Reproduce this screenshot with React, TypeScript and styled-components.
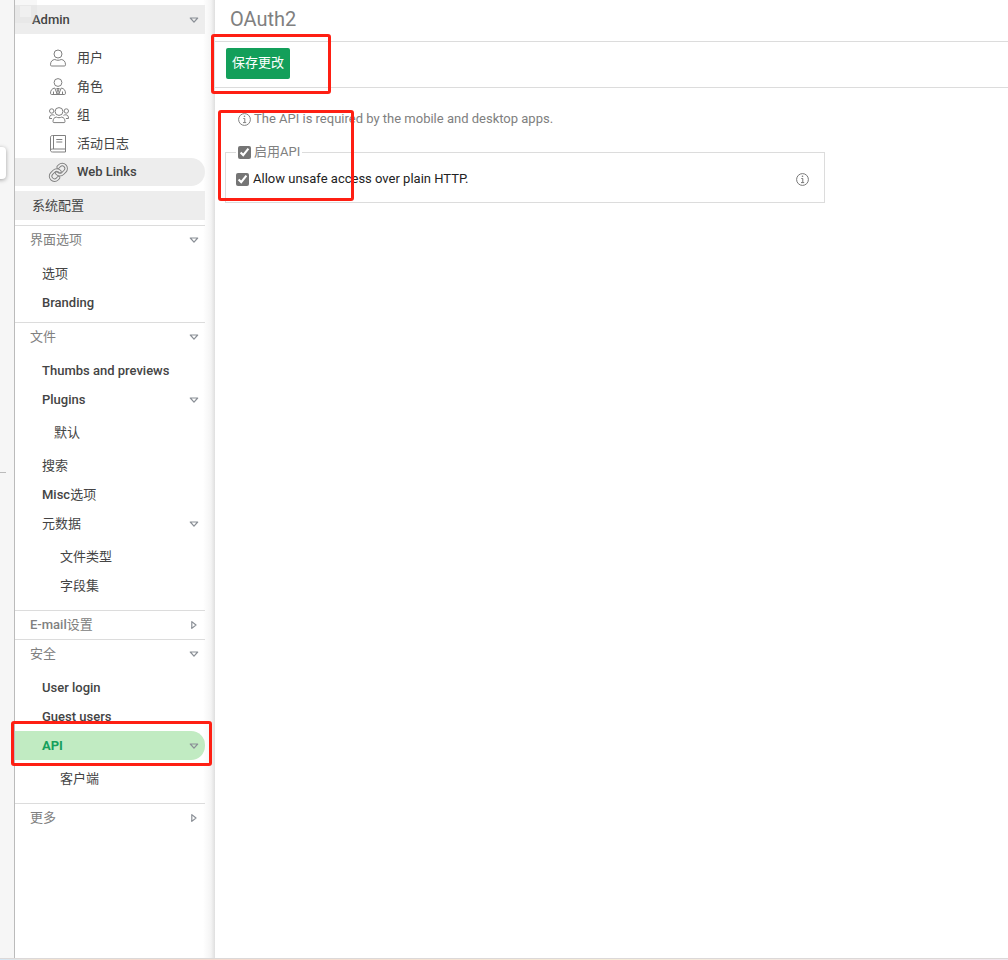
import React from 'react';
import styled, { createGlobalStyle, css } from 'styled-components';

const GlobalStyle = createGlobalStyle`
  * { box-sizing: border-box; }
  body {
    margin: 0;
    background: #fff;
    color: #444;
    font-family: Roboto, 'Noto Sans CJK SC', sans-serif;
    font-size: 13px;
    line-height: 20px;
  }
  ul { list-style: none; margin: 0; padding: 0; }
  a { color: inherit; text-decoration: none; }
`;

const Page = styled.div`
  position: relative;
  display: flex;
  flex-direction: column;
  min-height: 100vh;
`;

const Columns = styled.div`
  display: flex;
  flex: 1;
`;

const Rail = styled.div`
  position: relative;
  flex: none;
  width: 15px;
  background: #f6f6f6;
  border-right: 1px solid #bbb;
`;

const RailTab = styled.div`
  position: absolute;
  left: -6px;
  top: 147px;
  width: 12px;
  height: 32px;
  border-radius: 4px;
  background: #fff;
  box-shadow: 0 1px 4px rgba(0, 0, 0, 0.35);
`;

const RailLine = styled.div`
  position: absolute;
  left: 0;
  top: 472px;
  width: 6px;
  height: 1px;
  background: #bbb;
`;

const Sidebar = styled.nav`
  flex: none;
  width: 200px;
  padding: 5px 10px 0 0;
  background: linear-gradient(to left, #dfdfdf 0, #f4f4f4 4px, #fff 12px);
`;

const Ghost = styled.div`
  position: absolute;
  left: 15px;
  top: 0;
  width: 22px;
  height: 23px;
  border: solid rgba(0, 0, 0, 0.03);
  border-width: 6px 6px 6px 5px;
  background: rgba(255, 255, 255, 0.2);
`;

const Banner = styled.a`
  display: flex;
  align-items: center;
  justify-content: space-between;
  height: 29px;
  padding: 0 6px 0 17px;
  background: #ededed;
  font-weight: 500;
`;

const rowColors = {
  plain: css``,
  grey: css`background: #ededed;`,
  green: css`
    background: #c1ebc2;
    color: #16a05c;
    font-weight: 700;
  `,
};

const Row = styled.a<{ $indent: number; $tone?: keyof typeof rowColors }>`
  display: flex;
  align-items: center;
  justify-content: space-between;
  height: 28px;
  padding: 0 6px 0 ${(p) => p.$indent}px;
  border-radius: 0 14px 14px 0;
  font-weight: 500;
  ${(p) => rowColors[p.$tone ?? 'plain']}
`;

const Item = styled.li`
  &:nth-child(even) > a { height: 29px; }
`;

const IconList = styled.ul`
  padding: 10px 0 5px;
`;

const IconRow = styled(Row)`
  justify-content: flex-start;
  gap: 8px;
`;

const Group = styled.section`
  border-top: 1px solid #dcdcdc;
`;

const SystemBlock = styled.div`
  padding-bottom: 5px;
`;

const GroupHeader = styled.button<{ $open: boolean }>`
  display: flex;
  align-items: center;
  justify-content: space-between;
  width: 100%;
  height: ${(p) => (p.$open ? 29 : 28)}px;
  padding: 0 6px 1px 15px;
  border: 0;
  background: none;
  color: #808080;
  font: inherit;
  font-weight: 500;
`;

const List = styled.ul`
  padding: 5px 0;
  & > ${Item}:last-child > a { height: 29px; }
`;

const SubList = styled.ul`
  padding: 5px 0;
`;

const Han = styled.span`
  font-weight: 400;
`;

const Main = styled.main`
  flex: 1;
  min-width: 0;
`;

const TitleBar = styled.header`
  height: 42px;
  padding: 7px 15px;
  border-bottom: 1px solid #dcdcdc;
`;

const Title = styled.h1`
  margin: 0;
  color: #808080;
  font-size: 20px;
  line-height: 24px;
  font-weight: 400;
`;

const Toolbar = styled.div`
  padding: 6px 11px 8px;
  border-bottom: 1px solid #dcdcdc;
`;

const SaveButton = styled.button`
  display: block;
  height: 31px;
  padding: 0 6px 2px;
  border: 0;
  border-radius: 2px;
  background: #139f5a;
  color: #fff;
  font: inherit;
`;

const Content = styled.div`
  padding: 21px 10px;
`;

const Note = styled.p`
  display: flex;
  align-items: center;
  gap: 3px;
  margin: 0 0 13px;
  padding-left: 13px;
  color: #808080;
`;

const Options = styled.fieldset`
  max-width: 600px;
  margin: 0;
  padding: 7px 15px 13px 10px;
  border: 1px solid #dcdcdc;
`;

const Legend = styled.legend`
  height: 20px;
  padding: 0 2px;
  color: #808080;
`;

const OptionRow = styled.div`
  display: flex;
  align-items: center;
  justify-content: space-between;
`;

const CheckLabel = styled.label<{ $dark?: boolean }>`
  display: flex;
  align-items: center;
  gap: ${(p) => (p.$dark ? 4 : 3)}px;
  color: ${(p) => (p.$dark ? '#222' : 'inherit')};
`;

const Checkbox = styled.input`
  width: 13px;
  height: 13px;
  margin: 0;
  accent-color: #757575;
`;

const InfoButton = styled.button`
  display: flex;
  padding: 0;
  border: 0;
  background: none;
  color: #777;
`;

const BottomStrip = styled.div`
  height: 2px;
  border-top: 1px solid #dcd8d8;
  background: linear-gradient(to right, #d3e6f5 0, #f3e3d2 40px, #f5d9cf 180px, #f5ecd8 60%, #f0e6ee);
`;

const Highlight = styled.div<{ $x: number; $y: number; $w: number; $h: number }>`
  position: absolute;
  left: ${(p) => p.$x}px;
  top: ${(p) => p.$y}px;
  width: ${(p) => p.$w}px;
  height: ${(p) => p.$h}px;
  border: 3px solid #fe1f13;
  border-radius: 3px;
  pointer-events: none;
`;

const Caret = ({ open = true }: { open?: boolean }) => (
  <svg width="10" height="10" viewBox="0 0 10 10" fill="none" stroke="#8a8f96" strokeWidth="1.2" strokeLinejoin="round">
    {open ? <path d="M1.3 3h7.4L5 7.2z" /> : <path d="M2.8 1.6v6.8L7 5z" />}
  </svg>
);

const InfoIcon = () => (
  <svg width="13" height="13" viewBox="0 0 13 13" fill="none" stroke="currentColor">
    <circle cx="6.5" cy="6.5" r="5.9" strokeWidth="1" />
    <path d="M5.3 5.5h1.5v4M5 9.6h3.2" strokeWidth="1" />
    <circle cx="6.5" cy="3.3" r=".8" fill="currentColor" stroke="none" />
  </svg>
);

const chain = (
  <>
    <path d="M10 13a5 5 0 0 0 7.54.54l3-3a5 5 0 0 0-7.07-7.07l-1.72 1.71" />
    <path d="M14 11a5 5 0 0 0-7.54-.54l-3 3a5 5 0 0 0 7.07 7.07l1.71-1.71" />
  </>
);

const iconPaths = {
  user: (
    <>
      <circle cx="11" cy="7" r="4" />
      <path d="M3.5 17.800c0-3.400 1.700-5 4.300-5.300 2 1 4.400 1 6.400 0 2.600.3 4.300 1.900 4.300 5.300 0 .9-.4 1.200-1.200 1.200H4.700c-.8 0-1.200-.3-1.200-1.200z" />
    </>
  ),
  role: (
    <>
      <circle cx="11" cy="6.500" r="3.900" />
      <path d="M7.800 12c-2.800.5-4.300 2.300-4.300 5.300 0 .8.400 1.200 1.200 1.200h12.600c.8 0 1.200-.4 1.200-1.200 0-3-1.500-4.800-4.300-5.300" />
      <path d="M7.800 12l2.400 6.200M14.200 12l-2.400 6.200M9.700 12.500h2.600l-.8 1.600.7 3-1.200 1.300-1.200-1.300.7-3zM6.500 15.500v2.800M15.500 15.500v2.800" />
    </>
  ),
  group: (
    <>
      <circle cx="12" cy="7.500" r="3.900" />
      <path d="M6 17.600c0-2.700 1.200-4.200 3.300-4.500 1.700.8 3.700.8 5.400 0 2.100.3 3.300 1.800 3.300 4.500 0 .7-.3 1-1 1H7c-.7 0-1-.3-1-1z" />
      <circle cx="4.700" cy="7" r="2.200" />
      <circle cx="19.300" cy="7" r="2.200" />
      <path d="M5 14.500H2.500c0-2.300.8-3.700 2.700-3.700 1 0 1.800.2 2.300.6M18.900 14.500h2.600c0-2.300-.8-3.700-2.700-3.700-1 0-1.800.2-2.300.6" />
    </>
  ),
  log: (
    <>
      <path d="M5.500 2.500h13v13.500h-13c-1.200 0-2 .6-2 1.500V4.200c0-1 .8-1.700 2-1.700zM3.500 17.500c0 .8.800 1.500 2 1.500h13M18.500 16v3M6.500 2.500v13.500" />
      <path d="M9.300 6.500h6M9.300 9h6" strokeWidth="1.200" />
    </>
  ),
  link: (
    <g transform="translate(2 2) scale(.78)" strokeLinecap="round">
      <g strokeWidth="4.6">{chain}</g>
      <g strokeWidth="2.200" stroke="#ededed">{chain}</g>
    </g>
  ),
};

const NavIcon = ({ name }: { name: keyof typeof iconPaths }) => (
  <svg width="22" height="22" viewBox="0 0 22 22" overflow="visible" fill="none" stroke="#808080" strokeWidth="1">
    {iconPaths[name]}
  </svg>
);

// Han glyphs stay at regular weight inside the semi-bold navigation labels.
const NavLabel = ({ text }: { text: string }) => (
  <span>
    {text.split(/([\u4e00-\u9fff]+)/).filter(Boolean).map((part) =>
      /[\u4e00-\u9fff]/.test(part) ? <Han key={part}>{part}</Han> : part
    )}
  </span>
);

const adminItems: { icon: keyof typeof iconPaths; label: string; hovered?: boolean }[] = [
  { icon: 'user', label: '用户' },
  { icon: 'role', label: '角色' },
  { icon: 'group', label: '组' },
  { icon: 'log', label: '活动日志' },
  { icon: 'link', label: 'Web Links', hovered: true },
];

type Entry = { label: string; active?: boolean; children?: string[]; childIndent?: number };

const groups: { title: string; entries?: Entry[] }[] = [
  { title: '界面选项', entries: [{ label: '选项' }, { label: 'Branding' }] },
  {
    title: '文件',
    entries: [
      { label: 'Thumbs and previews' },
      { label: 'Plugins', children: ['默认'], childIndent: 39 },
      { label: '搜索' },
      { label: 'Misc选项' },
      { label: '元数据', children: ['文件类型', '字段集'] },
    ],
  },
  { title: 'E-mail设置' },
  {
    title: '安全',
    entries: [
      { label: 'User login' },
      { label: 'Guest users' },
      { label: 'API', active: true, children: ['客户端'] },
    ],
  },
  { title: '更多' },
];

export default function App() {
  return (
    <Page>
      <GlobalStyle />
      <Columns>
        <Rail>
          <RailTab />
          <RailLine />
        </Rail>
        <Sidebar>
          <Banner href="#admin">
            Admin
            <Caret />
          </Banner>
          <IconList>
            {adminItems.map((item) => (
              <Item key={item.label}>
                <IconRow href="#item" $indent={32} $tone={item.hovered ? 'grey' : 'plain'}>
                  <NavIcon name={item.icon} />
                  <NavLabel text={item.label} />
                </IconRow>
              </Item>
            ))}
          </IconList>
          <SystemBlock>
            <Banner href="#system">
              <NavLabel text="系统配置" />
            </Banner>
          </SystemBlock>
          {groups.map((group) => (
            <Group key={group.title}>
              <GroupHeader type="button" $open={!!group.entries}>
                <NavLabel text={group.title} />
                <Caret open={!!group.entries} />
              </GroupHeader>
              {group.entries && (
                <List>
                  {group.entries.map((entry) => (
                    <Item key={entry.label}>
                      <Row href="#entry" $indent={27} $tone={entry.active ? 'green' : 'plain'}>
                        <NavLabel text={entry.label} />
                        {entry.children && <Caret />}
                      </Row>
                      {entry.children && (
                        <SubList>
                          {entry.children.map((child) => (
                            <Item key={child}>
                              <Row href="#child" $indent={entry.childIndent ?? 45}>
                                <NavLabel text={child} />
                              </Row>
                            </Item>
                          ))}
                        </SubList>
                      )}
                    </Item>
                  ))}
                </List>
              )}
            </Group>
          ))}
        </Sidebar>
        <Main>
          <TitleBar>
            <Title>OAuth2</Title>
          </TitleBar>
          <Toolbar>
            <SaveButton type="button">保存更改</SaveButton>
          </Toolbar>
          <Content>
            <Note>
              <InfoIcon />
              The API is required by the mobile and desktop apps.
            </Note>
            <Options>
              <Legend>
                <CheckLabel>
                  <Checkbox type="checkbox" defaultChecked />
                  启用API
                </CheckLabel>
              </Legend>
              <OptionRow>
                <CheckLabel $dark>
                  <Checkbox type="checkbox" defaultChecked />
                  Allow unsafe access over plain HTTP.
                </CheckLabel>
                <InfoButton type="button" aria-label="Info">
                  <InfoIcon />
                </InfoButton>
              </OptionRow>
            </Options>
          </Content>
        </Main>
      </Columns>
      <BottomStrip />
      <Ghost />
      <Highlight $x={211} $y={34} $w={120} $h={60} />
      <Highlight $x={218} $y={110} $w={136} $h={91} />
      <Highlight $x={11} $y={721} $w={201} $h={45} />
    </Page>
  );
}
